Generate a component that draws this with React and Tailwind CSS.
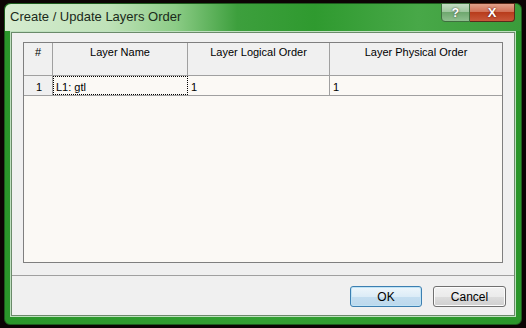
export default function App() {
  const font = { fontFamily: '"Liberation Sans", Arial, sans-serif' };
  return (
    <div className="w-[526px] h-[328px] bg-[#0c0404] overflow-hidden pt-[3px] pl-[4px]" style={font}>
      <div className="w-[518px] h-[322px] rounded-[6px] border border-[#1d5a1d] bg-[linear-gradient(90deg,#2a962a,#33a033_50%,#2a962a)] flex flex-col relative">
        {/* title bar */}
        <div className="h-[27px] shrink-0 rounded-t-[6px] bg-[linear-gradient(90deg,#d6ecd0_0%,#bfe2b8_20%,#8ccc86_33%,#3d9f3d_45%,#2f9a2f_60%,#48a848_80%,#3a9c3a_100%)] flex items-start">
          <div className="pl-[5px] pt-[6px] text-[13px] text-[#1a2a1a] leading-none">Create / Update Layers Order</div>
          <div className="ml-auto mr-[6px] flex -mt-px">
            <div className="w-[29px] h-[19px] rounded-bl-[4px] border border-[#3f6f3f] bg-[linear-gradient(180deg,#c3dcc3,#9fc79f_45%,#6fa86f_50%,#8fbf8f)] flex items-center justify-center text-[12px] font-bold text-white [text-shadow:0_0_2px_#333]">?</div>
            <div className="w-[45px] h-[19px] rounded-br-[4px] border border-l-0 border-[#5a2a1a] bg-[linear-gradient(180deg,#e0a08a,#d27258_45%,#b83c1c_50%,#c8583a)] flex items-center justify-center text-[13px] font-bold text-white [text-shadow:0_0_2px_#400]">X</div>
          </div>
        </div>
        {/* client */}
        <div className="mx-[5px] mb-[7px] flex-1 border border-[#bfe0bf] flex flex-col">
          <div className="flex-1 bg-[#f0f0f0] border border-[#6a8a6a] flex flex-col">
            <div className="flex-1 px-[11px] pt-[9px] pb-[12px] flex">
              <div className="flex-1 border border-[#7f7f7f] bg-[#fbf9f5] flex flex-col text-[11px] text-black">
                <div className="h-[33px] flex border-b border-[#a0a0a0] bg-[#f0f0f0]">
                  <div className="w-[29px] border-r border-[#a0a0a0] text-center pt-[1px]">#</div>
                  <div className="w-[135px] border-r border-[#a0a0a0] text-center pt-[1px]">Layer Name</div>
                  <div className="w-[142px] border-r border-[#a0a0a0] text-center pt-[1px]">Layer Logical Order</div>
                  <div className="flex-1 text-center pt-[1px]">Layer Physical Order</div>
                </div>
                <div className="h-[20px] flex border-b border-[#a0a0a0]">
                  <div className="w-[29px] border-r border-[#a0a0a0] bg-[#f0f0f0] text-right pr-[10px] pt-[3px]">1</div>
                  <div className="w-[135px] pl-[2px] pt-[2px] border border-dotted border-black">L1: gtl</div>
                  <div className="w-[142px] border-r border-[#a0a0a0] pl-[3px] pt-[3px]">1</div>
                  <div className="flex-1 pl-[3px] pt-[3px]">1</div>
                </div>
              </div>
            </div>
            <div className="h-[40px] border-t border-[#a0a0a0] bg-[#f0f0f0] flex justify-end items-start pt-[10px] pr-[8px] gap-[11px]">
              <button className="w-[72px] h-[21px] rounded-[3px] border border-[#3c7fb1] bg-[linear-gradient(180deg,#eef6fb,#dcecf7_50%,#c4def0_50%,#bcd8ec)] text-[12px] text-black leading-none shadow-[inset_0_0_0_1px_#bfe3f5]">OK</button>
              <button className="w-[73px] h-[21px] rounded-[3px] border border-[#707070] bg-[linear-gradient(180deg,#f2f2f2,#ebebeb_50%,#dddddd_50%,#cfcfcf)] text-[12px] text-black leading-none shadow-[inset_0_0_0_1px_#fcfcfc]">Cancel</button>
            </div>
          </div>
        </div>
      </div>
    </div>
  );
}
